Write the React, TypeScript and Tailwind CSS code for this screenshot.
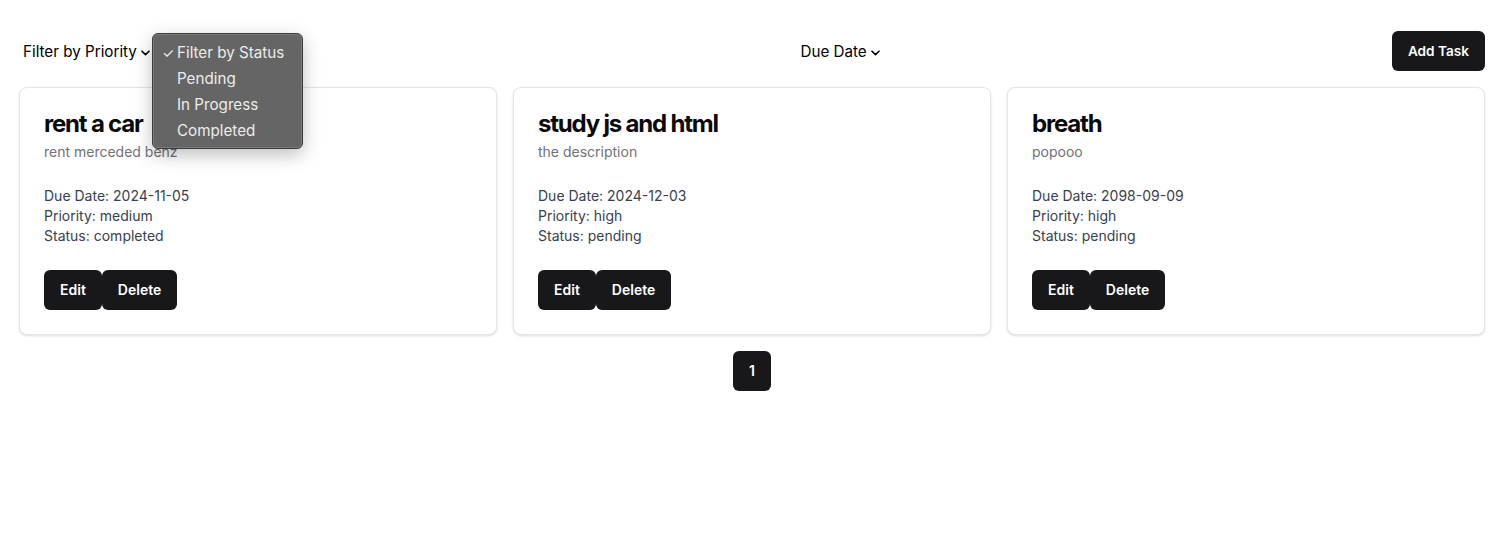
import React from "react";

const tasks = [
  { title: "rent a car", desc: "rent merceded benz", due: "2024-11-05", priority: "medium", status: "completed" },
  { title: "study js and html", desc: "the description", due: "2024-12-03", priority: "high", status: "pending" },
  { title: "breath", desc: "popooo", due: "2098-09-09", priority: "high", status: "pending" },
];

function Chevron() {
  return (
    <svg width="9" height="6" viewBox="0 0 9 6" className="ml-[4px] mt-[1px]">
      <path d="M1 1.2 L4.5 4.6 L8 1.2" fill="none" stroke="#000" strokeWidth="1.6" strokeLinecap="round" strokeLinejoin="round" />
    </svg>
  );
}

function SelectLike({ label, hidden }: { label: string; hidden?: boolean }) {
  return (
    <div className={hidden ? "invisible flex items-center px-[4px] h-[24px] pt-[2px] text-[15.2px] text-black" : "flex items-center px-[4px] h-[24px] pt-[2px] text-[15.2px] text-black"}>
      <span>{label}</span>
      <Chevron />
    </div>
  );
}

export default function App() {
  return (
    <div
      className="min-h-[558px] bg-white pl-[19px] pr-[24px] pt-[31px]"
      style={{ fontFamily: "Inter, 'Noto Sans', sans-serif" }}
    >
      <div className="flex items-center justify-between mb-4 h-10">
        <div className="relative flex items-center gap-[6px]">
          <SelectLike label="Filter by Priority" />
          <SelectLike label="Filter by Status" hidden />
          <div className="absolute left-[133px] top-[-6px] w-[151px] h-[116px] rounded-[6px] border border-[#3d3d3d] bg-[#656565] shadow-[0_6px_18px_rgba(0,0,0,0.25)] py-[6px] text-[15.2px] text-[#ececec] z-10">
            <div className="absolute inset-0 rounded-[5px] border border-[#7a7a7a] pointer-events-none" />
            <div className="flex items-center h-[26px] pl-[9px]">
              <span className="w-[15px] text-[14px] leading-none">✓</span>
              <span>Filter by Status</span>
            </div>
            <div className="flex items-center h-[26px] pl-[24px]">Pending</div>
            <div className="flex items-center h-[26px] pl-[24px]">In Progress</div>
            <div className="flex items-center h-[26px] pl-[24px]">Completed</div>
          </div>
        </div>
        <SelectLike label="Due Date" />
        <button className="h-10 px-4 rounded-md bg-[#18181b] text-white text-[13.6px] font-semibold">
          Add Task
        </button>
      </div>

      <div className="grid grid-cols-3 gap-4">
        {tasks.map((t) => (
          <div key={t.title} className="rounded-lg border border-[#e4e4e7] bg-white shadow-sm">
            <div className="flex flex-col space-y-1.5 p-6">
              <h3 className="text-2xl font-bold leading-none tracking-tighter text-[#09090b]">{t.title}</h3>
              <p className="text-sm text-[#71717a]">{t.desc}</p>
            </div>
            <div className="px-6 pb-6 text-sm text-[#374151]">
              <p>Due Date: {t.due}</p>
              <p>Priority: {t.priority}</p>
              <p>Status: {t.status}</p>
            </div>
            <div className="flex items-center px-6 pb-6">
              <button className="h-10 px-4 rounded-md bg-[#18181b] text-white text-sm font-semibold">Edit</button>
              <button className="h-10 px-4 rounded-md bg-[#18181b] text-white text-sm font-semibold">Delete</button>
            </div>
          </div>
        ))}
      </div>

      <div className="flex justify-center mt-4">
        <button className="h-10 px-4 rounded-md bg-[#18181b] text-white text-sm font-semibold">1</button>
      </div>
    </div>
  );
}
